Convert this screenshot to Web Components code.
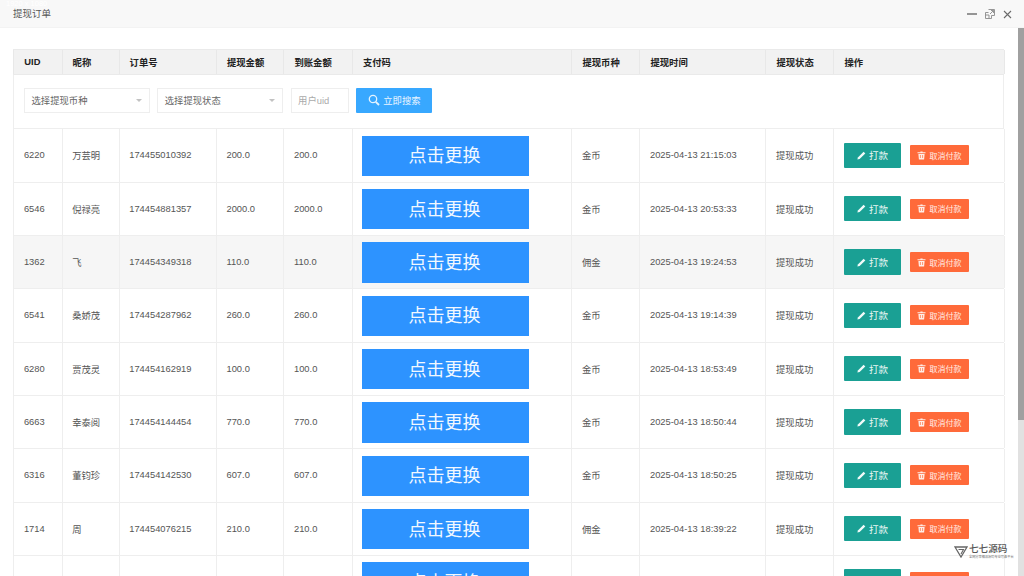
<!DOCTYPE html>
<html>
<head>
<meta charset="utf-8">
<style>
html, body { margin: 0; height: 100%; overflow: hidden; background: #fff; }
body { font: 9.33px "Liberation Sans", "Noto Sans CJK SC", sans-serif; color: #555; }
body { --cols: 48.3px 57px 97.3px 67.5px 68.5px 219.5px 68px 126px 68px 171.4px; }
</style>
</head>
<body>
<order-window>
  <span slot="title">提现订单</span>
  <order-table></order-table>
  <brand-mark></brand-mark>
</order-window>

<script>
const rows = [
    ['6220', '万芸明', '174455010392', '200.0', '200.0', '金币', '2025-04-13 21:15:03', '提现成功'],
    ['6546', '倪禄亮', '174454881357', '2000.0', '2000.0', '金币', '2025-04-13 20:53:33', '提现成功'],
    ['1362', '飞', '174454349318', '110.0', '110.0', '佣金', '2025-04-13 19:24:53', '提现成功'],
    ['6541', '桑娇茂', '174454287962', '260.0', '260.0', '金币', '2025-04-13 19:14:39', '提现成功'],
    ['6280', '贾茂灵', '174454162919', '100.0', '100.0', '金币', '2025-04-13 18:53:49', '提现成功'],
    ['6663', '幸泰阅', '174454144454', '770.0', '770.0', '金币', '2025-04-13 18:50:44', '提现成功'],
    ['6316', '董钧珍', '174454142530', '607.0', '607.0', '金币', '2025-04-13 18:50:25', '提现成功'],
    ['1714', '周', '174454076215', '210.0', '210.0', '佣金', '2025-04-13 18:39:22', '提现成功'],
    ['', '', '', '', '', '', '', '']
]

class OrderWindow extends HTMLElement {
    constructor() {
        super()
        const shadow = this.attachShadow({ mode: 'open' })
        shadow.innerHTML = `
        <style>
        :host { display: flex; flex-direction: column; height: 576px; position: relative; overflow: hidden; }
        header {
            flex: none; height: 28.3px; box-sizing: border-box; background: #f8f8f8;
            border-bottom: 1px solid #f3f3f3; display: flex; align-items: center;
            padding: 0 12px 2px 13px; color: #555; font-size: 9.5px;
        }
        .res { position: absolute; left: 6px; top: 0; font-size: 7.5px; line-height: 8px; color: #fff; }
        .tools { margin-left: auto; display: flex; align-items: center; gap: 8px; height: 18px; margin-top: 3px; }
        .tools svg { display: block; }
        main { flex: 1; display: flex; min-height: 0; }
        .content { flex: 1; min-width: 0; overflow: hidden; padding: 21px 13.5px 0 13.3px; }
        .track { flex: none; width: 6.5px; background: #e1e1e1; }
        .thumb { height: 392px; background: #a0a0a0; }
        </style>
        <header>
            <slot name="title"></slot>
            <span class="res">1920 x 1080</span>
            <div class="tools">
                <svg width="10" height="10" viewBox="0 0 10 10"><path d="M0 5h10" stroke="#444" stroke-width="1.1"/></svg>
                <svg width="10" height="10" viewBox="0 0 10 10" fill="none" stroke="#8a8a8a" stroke-width=".9"><path d="M3.5.5H9.5V6.5M.5 3.5V9.5H6.5M.5 3.5H3.5M6.5 9.5V6.5H9.5M.5 6H4V9.5"/><path d="M5 5 8.5 1.5M6 1.5H8.5V4"/></svg>
                <svg width="9" height="9" viewBox="0 0 9 9"><path d="M1 1l7 7M8 1 1 8" stroke="#6a6a6a" stroke-width="1.1"/></svg>
            </div>
        </header>
        <main>
            <div class="content"><slot></slot></div>
            <div class="track"><div class="thumb"></div></div>
        </main>`
    }
}

class OrderHead extends HTMLElement {
    constructor() {
        super()
        const shadow = this.attachShadow({ mode: 'open' })
        const titles = ['UID', '昵称', '订单号', '提现金额', '到账金额', '支付码', '提现币种', '提现时间', '提现状态', '操作']
        shadow.innerHTML = `
        <style>
        :host {
            display: grid; grid-template-columns: var(--cols); height: 25.6px; box-sizing: border-box;
            background: #f2f2f2; border-top: 1px solid #eaeaea; border-bottom: 1px solid #eaeaea;
            color: #222; font-weight: 700;
        }
        span { display: flex; align-items: center; padding: 0 0 1px 10px; border-left: 1px solid #e8e8e8; }
        span:last-child { border-right: 1px solid #e8e8e8; }
        </style>
        ${titles.map(t => `<span>${t}</span>`).join('')}`
    }
}

class FilterSelect extends HTMLElement {
    constructor() {
        super()
        const shadow = this.attachShadow({ mode: 'open' })
        shadow.innerHTML = `
        <style>
        :host {
            display: flex; align-items: center; justify-content: space-between; box-sizing: border-box;
            width: 126px; height: 24.5px; padding: 0 7px 0 6.5px; border: 1px solid #eee; color: #666;
        }
        i { width: 0; height: 0; border: 3.3px solid transparent; border-top: 3.6px solid #c2c2c2; border-bottom: 0; }
        </style>
        <slot></slot><i></i>`
    }
}

class OrderFilter extends HTMLElement {
    constructor() {
        super()
        const shadow = this.attachShadow({ mode: 'open' })
        shadow.innerHTML = `
        <style>
        :host {
            display: flex; gap: 7.3px; align-items: flex-start; box-sizing: border-box; height: 54.4px;
            padding: 13.2px 9.7px 0; border-left: 1px solid #eee; border-right: 1px solid #eee;
            border-bottom: 1px solid #eee;
        }
        .uid {
            box-sizing: border-box; width: 58.5px; height: 24.5px; padding-left: 6.5px; border: 1px solid #eee;
            color: #aaa; display: flex; align-items: center;
        }
        .go {
            width: 76px; height: 24.5px; background: #38a8ff; border-radius: 1px; color: #eaf5ff;
            display: flex; align-items: center; justify-content: center; gap: 3px;
        }
        svg { display: block; }
        </style>
        <filter-select>选择提现币种</filter-select>
        <filter-select>选择提现状态</filter-select>
        <div class="uid">用户uid</div>
        <div class="go">
            <svg width="12" height="12" viewBox="0 0 12 12" fill="none" stroke="#e4f3ff" stroke-width="1.3"><circle cx="5" cy="5" r="3.7"/><path d="M7.8 7.8 11 11" stroke-width="1.8"/></svg>
            <span>立即搜索</span>
        </div>`
    }
}

class ActionButton extends HTMLElement {
    constructor() {
        super()
        const shadow = this.attachShadow({ mode: 'open' })
        shadow.innerHTML = `
        <style>
        :host {
            display: flex; align-items: center; justify-content: center; gap: 3px; box-sizing: border-box;
            border-radius: 1px; color: #e9f7f5;
        }
        :host([kind=pay]) { width: 57px; height: 25.4px; background: #1aa094; font-size: 9.5px; }
        :host([kind=cancel]) { width: 59px; height: 20px; background: #ff6a3a; font-size: 8px; color: #ffeee8; }
        svg { display: block; }
        </style>
        <slot name="icon"></slot><slot></slot>`
    }
}

class OrderRow extends HTMLElement {
    constructor(data) {
        super()
        const shadow = this.attachShadow({ mode: 'open' })
        shadow.innerHTML = `
        <style>
        :host {
            display: grid; grid-template-columns: var(--cols); height: 53.33px; box-sizing: border-box;
            border-bottom: 1px solid #eee;
        }
        :host([active]) { background: #f6f6f6; }
        div { display: flex; align-items: center; padding-left: 9.6px; border-left: 1px solid #eee; min-width: 0; white-space: nowrap; }
        div:last-child { border-right: 1px solid #eee; gap: 9px; }
        .code { font-size: 18px; color: #f2f8ff; }
        .code span {
            width: 167px; height: 40.4px; margin-top: 1px; padding: 0 3px 3px 0; box-sizing: border-box;
            background: #2d93ff; display: flex; align-items: center; justify-content: center;
        }
        </style>
        <div>${data[0]}</div>
        <div>${data[1]}</div>
        <div>${data[2]}</div>
        <div>${data[3]}</div>
        <div>${data[4]}</div>
        <div class="code"><span>点击更换</span></div>
        <div>${data[5]}</div>
        <div>${data[6]}</div>
        <div>${data[7]}</div>
        <div>
            <action-button kind="pay">
                <svg slot="icon" width="9" height="9" viewBox="0 0 9 9" style="display:block"><path d="M.4 8.6.9 6.4 6.6.7 8.3 2.4 2.6 8.1Z" fill="#f2fbfa"/></svg>
                打款
            </action-button>
            <action-button kind="cancel">
                <svg slot="icon" width="9" height="9" viewBox="0 0 9 9" style="display:block"><path d="M3.4.5h2.2v.8H8.5v1H.5v-1h2.9ZM1.4 3h6.2l-.5 5.5H1.9Z" fill="#ffeee8"/><path d="M3.4 4v3M5.6 4v3" stroke="#ff6a3a" stroke-width=".7"/></svg>
                取消付款
            </action-button>
        </div>`
    }
}

class OrderTable extends HTMLElement {
    constructor() {
        super()
        const shadow = this.attachShadow({ mode: 'open' })
        shadow.innerHTML = `<style>:host { display: block; }</style>`
        shadow.append(document.createElement('order-head'), document.createElement('order-filter'))
    }
    connectedCallback() {
        rows.forEach((data, i) => {
            const row = new OrderRow(data)
            if (i === 2) row.setAttribute('active', '')
            this.shadowRoot.append(row)
        })
    }
}

class BrandMark extends HTMLElement {
    constructor() {
        super()
        const shadow = this.attachShadow({ mode: 'open' })
        shadow.innerHTML = `
        <style>
        :host { position: absolute; left: 954px; top: 543px; display: flex; gap: 1px; color: #555; }
        svg { display: block; margin-top: 3px; }
        b { display: block; font-size: 9.6px; line-height: 12px; font-weight: 500; white-space: nowrap; }
        small { display: block; font-size: 3.2px; line-height: 4px; white-space: nowrap; color: #777; }
        </style>
        <svg width="14" height="12" viewBox="0 0 14 12" fill="none" stroke="#666" stroke-width="1.3"><path d="M1 1h12L7 11Z"/><path d="M4.5 3.5h5L7 8" stroke-width="1.1"/></svg>
        <div><b>七七源码</b><small>全网分享精品源码专业可靠平台</small></div>`
    }
}

customElements.define('order-head', OrderHead)
customElements.define('filter-select', FilterSelect)
customElements.define('order-filter', OrderFilter)
customElements.define('action-button', ActionButton)
customElements.define('order-row', OrderRow)
customElements.define('order-table', OrderTable)
customElements.define('brand-mark', BrandMark)
customElements.define('order-window', OrderWindow)
</script>
</body>
</html>
